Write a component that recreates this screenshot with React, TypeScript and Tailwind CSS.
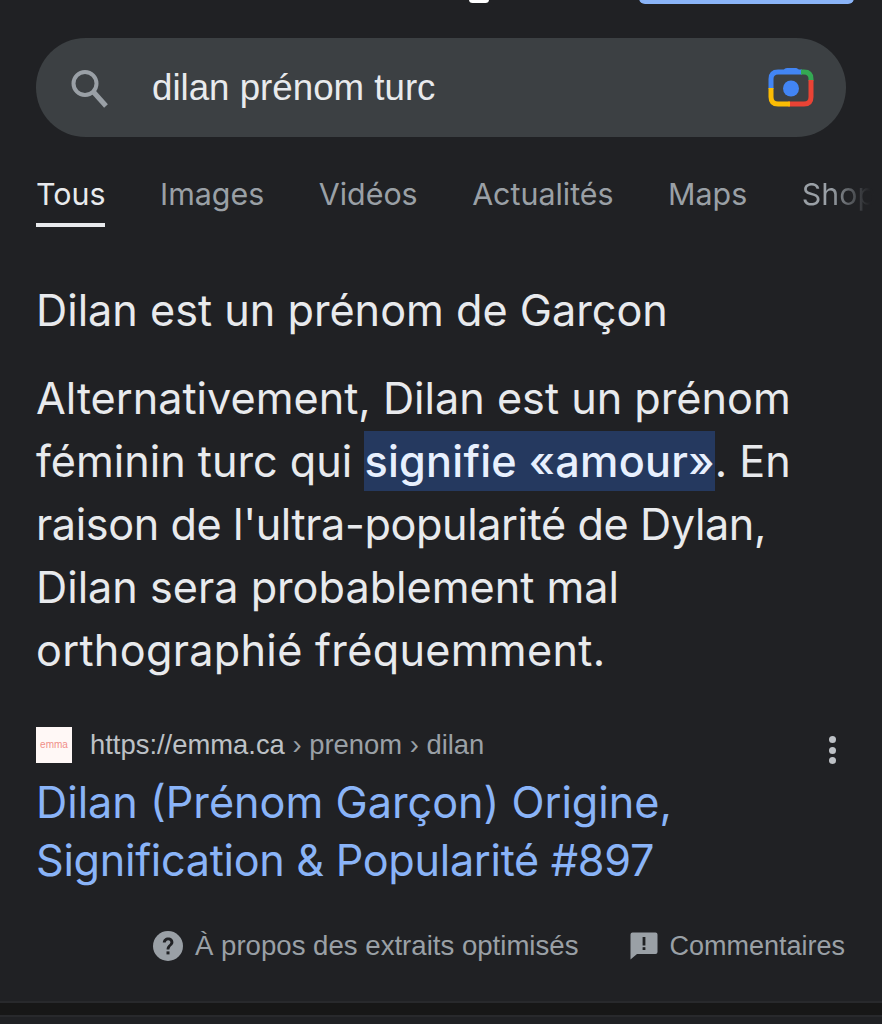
import React from "react";

const tabs = ["Images", "Vidéos", "Actualités", "Maps"];

function SearchIcon() {
  return (
    <svg width="42" height="42" viewBox="0 0 42 42" fill="none" stroke="#9aa0a6">
      <circle cx="17" cy="16.5" r="11.5" strokeWidth="4" />
      <path d="M25.5 25 L38 39" strokeWidth="5" />
    </svg>
  );
}

function CameraIcon() {
  return (
    <svg width="46" height="42" viewBox="0 0 46 42" fill="none">
      <path d="M14 5 L17 1.5 Q18 1 19 1 L28 1 Q29 1 30 2 L33 5 L14 5 Z" fill="#4285f4" />
      <path d="M3 22 L3 12 Q3 5 10 5 L34 5" stroke="#4285f4" strokeWidth="5" />
      <path d="M33 5 L36 5 Q43 5 43 12 L43 14" stroke="#34a853" strokeWidth="5" />
      <path d="M43 13 L43 30 Q43 37 36 37 L20 37" stroke="#ea4335" strokeWidth="5" />
      <path d="M3 21 L3 30 Q3 37 10 37 L22 37" stroke="#fbbc04" strokeWidth="5" />
      <circle cx="23" cy="21.5" r="8" fill="#4285f4" />
    </svg>
  );
}

function QuestionIcon() {
  return (
    <svg width="30" height="30" viewBox="0 0 30 30">
      <circle cx="15" cy="15" r="15" fill="#9aa0a6" />
      <path d="M9.8 11.6 C10 8.6 12.2 6.6 15.2 6.6 C18.2 6.6 20.4 8.6 20.4 11.2 C20.4 14.6 16.4 15 16.4 18.6 L13.6 18.6 C13.6 14 17.4 13.8 17.4 11.3 C17.4 10 16.4 9.2 15.1 9.2 C13.8 9.2 12.9 10.1 12.7 11.6 Z" fill="#202124" />
      <rect x="13.5" y="20.4" width="3" height="3" fill="#202124" />
    </svg>
  );
}

function FeedbackIcon() {
  return (
    <svg width="28" height="28" viewBox="0 0 28 28">
      <path d="M2.5 0.5 L25.5 0.5 Q27.5 0.5 27.5 2.5 L27.5 20 Q27.5 22 25.5 22 L7 22 L0.5 27.5 L0.5 2.5 Q0.5 0.5 2.5 0.5 Z" fill="#9aa0a6" />
      <rect x="12.6" y="5" width="2.8" height="8.5" fill="#202124" />
      <rect x="12.6" y="15.2" width="2.8" height="2.8" fill="#202124" />
    </svg>
  );
}

export default function App() {
  return (
    <div className="relative flex h-[1024px] w-[882px] flex-col overflow-hidden bg-[#202124] font-['Inter','Roboto',sans-serif]">
      <div className="absolute left-[469px] top-[-4px] h-[7px] w-[20px] rounded-full bg-white" />
      <div className="absolute left-[639px] top-[-10px] h-[14px] w-[215px] rounded-[6px] bg-[#8ab4f8]" />

      <div className="mx-[36px] mt-[38px] flex h-[99px] items-center rounded-[50px] bg-[#3c4043] px-[32px]">
        <SearchIcon />
        <span className="ml-[42px] flex-1 font-['Liberation_Sans',sans-serif] text-[36.7px] text-[#e8eaed]">dilan prénom turc</span>
        <CameraIcon />
      </div>

      <div className="relative mt-[33px] flex h-[57px] items-start gap-[54.5px] overflow-hidden whitespace-nowrap pl-[36px] text-[30.4px] leading-[48px] text-[#9aa0a6]">
        <div className="h-[57px] border-b-[4px] border-[#e8eaed] text-[#e8eaed]">Tous</div>
        {tabs.map((t) => (
          <div key={t}>{t}</div>
        ))}
        <div className="w-[72px] shrink-0 bg-gradient-to-r from-[#9aa0a6] from-40% to-[#202124] to-95% bg-clip-text text-transparent">Shop</div>
      </div>

      <div className="ml-[36px] mt-[56px] text-[43.2px] leading-[55px] text-[#e8eaed]">Dilan est un prénom de Garçon</div>

      <p className="ml-[36px] mr-[30px] mt-[29px] text-[43.2px] leading-[63px] text-[#e8eaed]">
        Alternativement, Dilan est un prénom
        <br />
        féminin turc qui{" "}
        <span className="bg-[#25395f] py-[4px] font-medium tracking-[0.25px] text-[#e8f0fe]">signifie «amour»</span>. En
        <br />
        <span className="tracking-[-0.4px]">raison de l'ultra-popularité de Dylan,</span>
        <br />
        Dilan sera probablement mal
        <br />
        <span className="tracking-[0.3px]">orthographié fréquemment.</span>
      </p>

      <div className="mt-[45px] flex h-[36px] items-center pl-[36px] pr-[46px]">
        <div className="flex h-[36px] w-[36px] items-center justify-center bg-[#fff8f6] font-['Liberation_Sans',sans-serif] text-[10px] leading-none text-[#f08f88]">
          emma
        </div>
        <span className="ml-[18px] flex-1 font-['Liberation_Sans',sans-serif] text-[27.4px] text-[#bdc1c6]">
          https://emma.ca<span className="text-[#9aa0a6]"> › prenom › dilan</span>
        </span>
        <div className="mt-[10px] flex flex-col gap-[3.5px]">
          <span className="h-[7px] w-[7px] rounded-full bg-[#bdc1c6]" />
          <span className="h-[7px] w-[7px] rounded-full bg-[#bdc1c6]" />
          <span className="h-[7px] w-[7px] rounded-full bg-[#bdc1c6]" />
        </div>
      </div>

      <div className="ml-[36px] mt-[10px] text-[43.2px] leading-[58px] text-[#8ab4f8]">
        Dilan (Prénom Garçon) Origine,
        <br />
        <span className="tracking-[-0.3px]">Signification &amp; Popularité #897</span>
      </div>

      <div className="mt-[41px] flex items-center justify-end pr-[37px] font-['Liberation_Sans',sans-serif] text-[27px] leading-[32px] text-[#9aa0a6]">
        <QuestionIcon />
        <span className="ml-[12px] text-[27.6px]">À propos des extraits optimisés</span>
        <span className="ml-[52px]"><FeedbackIcon /></span>
        <span className="ml-[11px]">Commentaires</span>
      </div>

      <div className="mt-[39px] h-[16px] border-y-[2px] border-[#28292c] bg-[#171717]" />
    </div>
  );
}
